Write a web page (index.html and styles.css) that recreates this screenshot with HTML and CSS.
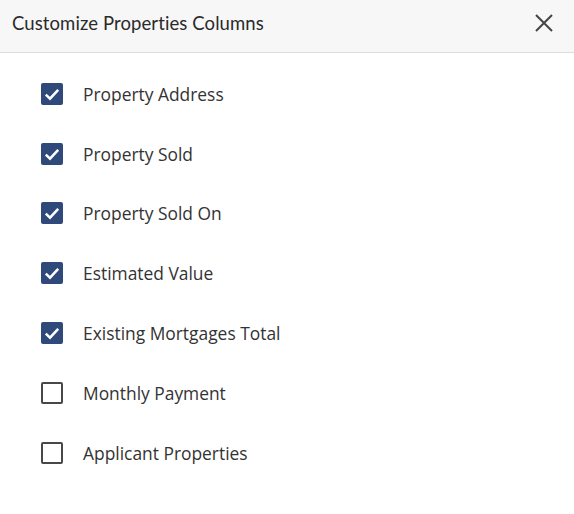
FILE: index.html
```html
<!DOCTYPE html>
<html>
<head>
<meta charset="utf-8">
<link rel="stylesheet" href="styles.css">
</head>
<body>
<div class="dialog">
  <div class="header">
    <span class="title">Customize Properties Columns</span>
    <button class="close" aria-label="Close">
      <svg width="20" height="20" viewBox="0 0 20 20"><path d="M2 2 L18 18 M18 2 L2 18" stroke="#444" stroke-width="2" fill="none"/></svg>
    </button>
  </div>
  <ul class="list">
    <li class="row"><span class="box checked"><svg viewBox="0 0 22 22" width="22" height="22"><path d="M4.8 11.6 L9 15.6 L17.2 6.8" stroke="#fff" stroke-width="2.5" fill="none"/></svg></span><span class="label">Property Address</span></li>
    <li class="row"><span class="box checked"><svg viewBox="0 0 22 22" width="22" height="22"><path d="M4.8 11.6 L9 15.6 L17.2 6.8" stroke="#fff" stroke-width="2.5" fill="none"/></svg></span><span class="label">Property Sold</span></li>
    <li class="row"><span class="box checked"><svg viewBox="0 0 22 22" width="22" height="22"><path d="M4.8 11.6 L9 15.6 L17.2 6.8" stroke="#fff" stroke-width="2.5" fill="none"/></svg></span><span class="label">Property Sold On</span></li>
    <li class="row"><span class="box checked"><svg viewBox="0 0 22 22" width="22" height="22"><path d="M4.8 11.6 L9 15.6 L17.2 6.8" stroke="#fff" stroke-width="2.5" fill="none"/></svg></span><span class="label">Estimated Value</span></li>
    <li class="row"><span class="box checked"><svg viewBox="0 0 22 22" width="22" height="22"><path d="M4.8 11.6 L9 15.6 L17.2 6.8" stroke="#fff" stroke-width="2.5" fill="none"/></svg></span><span class="label">Existing Mortgages Total</span></li>
    <li class="row"><span class="box"></span><span class="label">Monthly Payment</span></li>
    <li class="row"><span class="box"></span><span class="label">Applicant Properties</span></li>
  </ul>
</div>
</body>
</html>
```
FILE: styles.css
```css
html, body {
  margin: 0;
  padding: 0;
  background: #fff;
}
.dialog {
  width: 574px;
  height: 514px;
  background: #fff;
}
.header {
  height: 52px;
  background: #f7f7f7;
  border-bottom: 1px solid #dcdcdc;
  display: flex;
  align-items: center;
  justify-content: space-between;
  padding: 0 20px 0 12px;
  box-sizing: content-box;
}
.title {
  font-family: "Lato", "Open Sans", sans-serif;
  font-size: 18.5px;
  letter-spacing: 0.1px;
  color: #2a2a2a;
  position: relative;
  top: -3px;
}
.close {
  border: 0;
  background: transparent;
  padding: 0;
  width: 20px;
  height: 20px;
  display: flex;
  position: relative;
  top: -3px;
}
.list {
  list-style: none;
  margin: 0;
  padding: 11px 0 0 41px;
}
.row {
  height: 59.8px;
  display: flex;
  align-items: center;
  gap: 20px;
}
.box {
  width: 22px;
  height: 22px;
  box-sizing: border-box;
  border: 2px solid #484848;
  border-radius: 2px;
  flex: none;
  display: flex;
}
.box.checked {
  border: 0;
  background: #2f4a7a;
}
.label {
  font-family: "Open Sans", sans-serif;
  font-size: 17.4px;
  color: #333;
}
```
